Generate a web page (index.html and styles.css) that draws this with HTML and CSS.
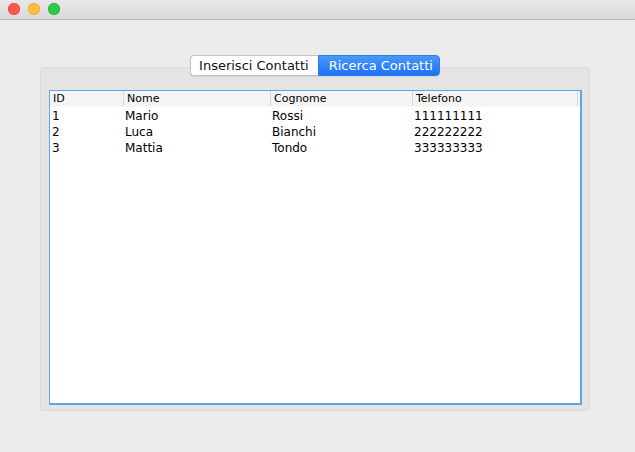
FILE: index.html
```html
<!DOCTYPE html>
<html>
<head>
<meta charset="utf-8">
<link rel="stylesheet" href="styles.css">
</head>
<body>
<div class="window">
  <div class="titlebar">
    <span class="light red"></span>
    <span class="light yellow"></span>
    <span class="light green"></span>
  </div>
  <div class="content">
    <div class="tabpane">
      <div class="tabs">
        <div class="tab">Inserisci Contatti</div>
        <div class="tab active">Ricerca Contatti</div>
      </div>
      <div class="box">
        <div class="scroll">
          <div class="row header">
            <div class="c c1">ID</div>
            <div class="c c2">Nome</div>
            <div class="c c3">Cognome</div>
            <div class="c c4">Telefono</div>
          </div>
          <div class="row">
            <div class="c c1">1</div>
            <div class="c c2">Mario</div>
            <div class="c c3">Rossi</div>
            <div class="c c4">111111111</div>
          </div>
          <div class="row">
            <div class="c c1">2</div>
            <div class="c c2">Luca</div>
            <div class="c c3">Bianchi</div>
            <div class="c c4">222222222</div>
          </div>
          <div class="row">
            <div class="c c1">3</div>
            <div class="c c2">Mattia</div>
            <div class="c c3">Tondo</div>
            <div class="c c4">333333333</div>
          </div>
        </div>
      </div>
    </div>
  </div>
</div>
</body>
</html>
```

FILE: styles.css
```css
html, body {
  margin: 0;
  padding: 0;
}
body {
  background: #ececec;
  font-family: "DejaVu Sans", "Liberation Sans", sans-serif;
  width: 635px;
  height: 452px;
  overflow: hidden;
}
.window {
  width: 635px;
  height: 452px;
  background: #ececec;
}
.titlebar {
  height: 19px;
  background: linear-gradient(#e9e9e9, #d8d8d8);
  border-bottom: 1px solid #bdbdbd;
  display: flex;
  align-items: center;
  padding-left: 8px;
  gap: 8px;
  box-sizing: content-box;
}
.light {
  width: 12px;
  height: 12px;
  border-radius: 50%;
  display: block;
  margin-top: -1px;
}
.red { background: #fc5753; box-shadow: inset 0 0 0 0.5px #df4744; }
.yellow { background: #fdbc40; box-shadow: inset 0 0 0 0.5px #de9f34; }
.green { background: #33c748; box-shadow: inset 0 0 0 0.5px #27aa35; }

.content {
  padding: 35px 0 0 40px;
}
.tabpane {
  width: 550px;
}
.tabs {
  display: flex;
  justify-content: center;
  position: relative;
  z-index: 1;
  margin-bottom: -9px;
}
.tab {
  height: 19px;
  line-height: 19px;
  font-size: 13px;
  padding: 0 9px 0 8px;
  background: #ffffff;
  border: 1px solid #c3c3c3;
  border-right: none;
  border-radius: 4px 0 0 4px;
  color: #111;
  box-shadow: 0 1px 1px rgba(0,0,0,0.08);
}
.tab.active {
  background: linear-gradient(#4a98fa, #1b72f3);
  border: 1px solid #2b7df2;
  border-radius: 0 4px 4px 0;
  color: #fff;
  padding: 0 6px 0 10px;
}
.box {
  background: #e4e4e4;
  border: 1px solid #dcdcdc;
  border-radius: 4px;
  padding: 22px 7px 0 8px;
  box-sizing: content-box;
  height: 320px;
}
.scroll {
  height: 312px;
  width: 530px;
  background: #fff;
  border: 1px solid #5aa7ef;
  border-bottom-width: 2px;
  border-right-width: 2px;
}
.row {
  display: flex;
  height: 16px;
  line-height: 16px;
  font-size: 12px;
  color: #000;
}
.row.header {
  height: 15px;
  line-height: 15px;
  background: #f4f4f4;
  font-size: 11px;
  border-bottom: 1px solid #f7f7f7;
  margin-bottom: 1px;
}
.c {
  box-sizing: border-box;
  padding-left: 2px;
  white-space: nowrap;
}
.c1 { width: 73px; }
.c2 { width: 147px; }
.c3 { width: 142px; }
.c4 { width: 166px; }
.header .c {
  padding-left: 3px;
}
.header .c2, .header .c3, .header .c4 {
  border-left: 1px solid #d8d8d8;
  padding-left: 3px;
}
.header .c4 {
  border-right: 1px solid #d8d8d8;
}
```
